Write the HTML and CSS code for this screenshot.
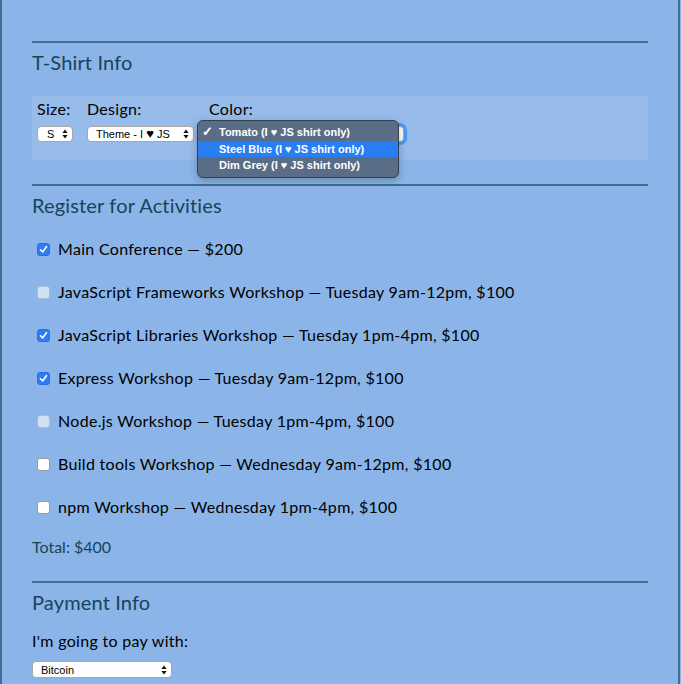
FILE: index.html
```html
<!DOCTYPE html>
<html>
<head>
<meta charset="utf-8">
<link rel="stylesheet" href="styles.css">
</head>
<body>
<div class="page">
  <section class="section">
    <div class="rule"></div>
    <h2 class="heading">T-Shirt Info</h2>
    <div class="panel">
      <div class="col col-size">
        <div class="label">Size:</div>
        <div class="select sel-size"><span class="sel-text">S</span><span class="arrows"><svg width="6" height="10" viewBox="0 0 6 10"><path d="M3 0.5 L5.6 4 H0.4 Z M3 9.5 L5.6 6 H0.4 Z" fill="#111"/></svg></span></div>
      </div>
      <div class="col col-design">
        <div class="label">Design:</div>
        <div class="select sel-design"><span class="sel-text">Theme - I <b class="heart">♥</b> JS</span><span class="arrows"><svg width="6" height="10" viewBox="0 0 6 10"><path d="M3 0.5 L5.6 4 H0.4 Z M3 9.5 L5.6 6 H0.4 Z" fill="#111"/></svg></span></div>
      </div>
      <div class="col col-color">
        <div class="label">Color:</div>
        <div class="select sel-color focused"><span class="sel-text"></span><span class="arrows"><svg width="6" height="10" viewBox="0 0 6 10"><path d="M3 0.5 L5.6 4 H0.4 Z M3 9.5 L5.6 6 H0.4 Z" fill="#111"/></svg></span></div>
        <div class="popup">
          <div class="opt"><span class="check">✓</span>Tomato (I ♥ JS shirt only)</div>
          <div class="opt hl"><span class="check"></span>Steel Blue (I ♥ JS shirt only)</div>
          <div class="opt"><span class="check"></span>Dim Grey (I ♥ JS shirt only)</div>
        </div>
      </div>
    </div>
  </section>

  <section class="section sec-act">
    <div class="rule"></div>
    <h2 class="heading">Register for Activities</h2>
    <div class="activities">
      <div class="act"><span class="cb on"><svg width="9" height="9" viewBox="0 0 9 9"><path d="M1.5 4.8 L3.6 7 L7.6 1.6" fill="none" stroke="#fff" stroke-width="1.6" stroke-linecap="round" stroke-linejoin="round"/></svg></span>Main Conference — $200</div>
      <div class="act"><span class="cb dis"></span>JavaScript Frameworks Workshop — Tuesday 9am-12pm, $100</div>
      <div class="act"><span class="cb on"><svg width="9" height="9" viewBox="0 0 9 9"><path d="M1.5 4.8 L3.6 7 L7.6 1.6" fill="none" stroke="#fff" stroke-width="1.6" stroke-linecap="round" stroke-linejoin="round"/></svg></span>JavaScript Libraries Workshop — Tuesday 1pm-4pm, $100</div>
      <div class="act"><span class="cb on"><svg width="9" height="9" viewBox="0 0 9 9"><path d="M1.5 4.8 L3.6 7 L7.6 1.6" fill="none" stroke="#fff" stroke-width="1.6" stroke-linecap="round" stroke-linejoin="round"/></svg></span>Express Workshop — Tuesday 9am-12pm, $100</div>
      <div class="act"><span class="cb dis"></span>Node.js Workshop — Tuesday 1pm-4pm, $100</div>
      <div class="act"><span class="cb"></span>Build tools Workshop — Wednesday 9am-12pm, $100</div>
      <div class="act"><span class="cb"></span>npm Workshop — Wednesday 1pm-4pm, $100</div>
    </div>
    <div class="total">Total: $400</div>
  </section>

  <section class="section sec-pay">
    <div class="rule"></div>
    <h2 class="heading">Payment Info</h2>
    <div class="pay-label">I'm going to pay with:</div>
    <div class="select sel-pay"><span class="sel-text">Bitcoin</span><span class="arrows"><svg width="6" height="10" viewBox="0 0 6 10"><path d="M3 0.5 L5.6 4 H0.4 Z M3 9.5 L5.6 6 H0.4 Z" fill="#111"/></svg></span></div>
  </section>
</div>
</body>
</html>
```

FILE: styles.css
```css
html, body {
  margin: 0;
  padding: 0;
}
body {
  background: #8bb5e8;
  font-family: "Lato", "Open Sans", sans-serif;
  color: #000;
}
.page {
  width: 680px;
  min-height: 684px;
  box-sizing: border-box;
  border-left: 2px solid #3f6e93;
  border-right: 2px solid #3f6e93;
  padding: 41px 30px 0 30px;
}
.rule {
  height: 2px;
  background: #3f6e93;
}
.heading {
  margin: 7px 0 0 0;
  font-size: 20px;
  line-height: 24px;
  font-weight: 400;
  color: #174459;
  letter-spacing: 0.15px;
}
.panel {
  margin-top: 22px;
  height: 64px;
  box-sizing: border-box;
  background: #97bbea;
  border-radius: 4px;
  padding: 4px 5px 0 5px;
  display: flex;
}
.col {
  display: flex;
  flex-direction: column;
  gap: 8px;
}
.col-size { width: 50px; }
.col-design { width: 122px; }
.col-color { position: relative; }
.label {
  font-size: 16px;
  line-height: 18px;
  letter-spacing: 0.3px;
}
.select {
  position: relative;
  height: 16px;
  box-sizing: border-box;
  background: #fff;
  border: 1px solid #a7a7a7;
  border-radius: 4px;
  font-family: "Liberation Sans", Arial, sans-serif;
  font-size: 11px;
  line-height: 14px;
  color: #000;
  display: flex;
  align-items: center;
  justify-content: space-between;
  padding: 0 4px 0 8px;
}
.arrows {
  display: flex;
  align-items: center;
}
.sel-size { width: 36px; padding-left: 9px; }
.sel-design { width: 107px; }
.heart { font-size: 13px; }
.sel-color { width: 195px; }
.focused {
  box-shadow: 0 0 0 3px rgba(54, 140, 250, 0.75);
}
.popup {
  position: absolute;
  left: -12px;
  top: 20px;
  width: 202px;
  height: 58px;
  box-sizing: border-box;
  background: #5a6d87;
  border: 1px solid #33404f;
  border-radius: 6px;
  box-shadow: 0 3px 8px rgba(0, 0, 0, 0.25);
  padding-top: 3px;
  font-family: "Liberation Sans", Arial, sans-serif;
  font-weight: 700;
  font-size: 11px;
  color: #fff;
}
.opt {
  height: 16.5px;
  line-height: 16px;
  display: flex;
  align-items: center;
}
.opt.hl {
  background: #2a7ef4;
}
.check {
  width: 21px;
  padding-left: 4px;
  box-sizing: border-box;
  font-size: 13px;
}
.sec-act { margin-top: 24px; }
.activities {
  margin-top: 22px;
  display: flex;
  flex-direction: column;
  gap: 23px;
}
.act {
  height: 20px;
  line-height: 20px;
  font-size: 16px;
  letter-spacing: 0.3px;
  display: flex;
  align-items: center;
  padding-left: 5px;
}
.cb {
  width: 13px;
  height: 13px;
  box-sizing: border-box;
  border: 1px solid #9a9a9a;
  border-radius: 3px;
  background: #fff;
  margin-right: 8px;
  display: flex;
  align-items: center;
  justify-content: center;
  flex: none;
}
.cb.on {
  background: #2f7bf5;
  border-color: #2a6fe0;
}
.cb.dis {
  background: #d1e1f5;
  border-color: #a8bcd6;
}
.total {
  margin-top: 20px;
  font-size: 16px;
  line-height: 20px;
  color: #174459;
}
.sec-pay { margin-top: 24px; }
.pay-label {
  margin-top: 17px;
  font-size: 16px;
  line-height: 20px;
  letter-spacing: 0.3px;
}
.sel-pay {
  margin-top: 10px;
  width: 140px;
  height: 17px;
}
```
